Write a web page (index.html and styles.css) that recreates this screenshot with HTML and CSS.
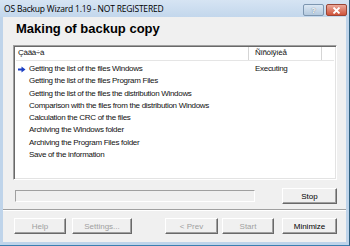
FILE: index.html
```html
<!DOCTYPE html>
<html lang="en">
<head>
    <meta charset="UTF-8">
    <title>OS Backup Wizard 1.19 - NOT REGISTERED</title>
    <link rel="stylesheet" href="styles.css">
</head>
<body>
    <div class="window">
        <div class="titlebar">
            <span class="title">OS Backup Wizard 1.19 - NOT REGISTERED</span>
            <div class="caption-buttons">
                <div class="cap-btn help-cap">?</div>
                <div class="cap-btn close-cap">
                    <svg width="9" height="7" viewBox="0 0 9 7"><path d="M1.5 0.5 L7.5 6.5 M7.5 0.5 L1.5 6.5" stroke="#fff" stroke-width="1.8"/></svg>
                </div>
            </div>
        </div>

        <div class="client">
            <h1>Making of backup copy</h1>

            <div class="listbox">
                <div class="list-header">
                    <div class="col-task">Çàäà÷à</div>
                    <div class="col-state">Ñîñòîÿíèå</div>
                    <div class="col-rest"></div>
                </div>
                <div class="rows">
                    <div class="row">
                        <span class="mark">
                            <svg width="8" height="7" viewBox="0 0 8 7"><path d="M0 2.5 H3.5 V0.5 L7.5 3.5 L3.5 6.5 V4.5 H0 Z" fill="#1c3fc4"/></svg>
                        </span>
                        <span class="task">Getting the list of the files Windows</span>
                        <span class="state">Executing</span>
                    </div>
                    <div class="row"><span class="mark"></span><span class="task">Getting the list of the files Program Files</span></div>
                    <div class="row"><span class="mark"></span><span class="task">Getting the list of the files the distribution Windows</span></div>
                    <div class="row"><span class="mark"></span><span class="task">Comparison with the files from the distribution Windows</span></div>
                    <div class="row"><span class="mark"></span><span class="task">Calculation the CRC of the files</span></div>
                    <div class="row"><span class="mark"></span><span class="task">Archiving the Windows folder</span></div>
                    <div class="row"><span class="mark"></span><span class="task">Archiving the Program Files folder</span></div>
                    <div class="row"><span class="mark"></span><span class="task">Save of the information</span></div>
                </div>
            </div>

            <div class="progress-row">
                <div class="progress"></div>
                <button class="btn btn-stop">Stop</button>
            </div>

            <div class="separator"></div>

            <div class="button-row">
                <button class="btn btn-help" disabled>Help</button>
                <button class="btn btn-settings" disabled>Settings...</button>
                <button class="btn btn-prev" disabled>&lt; Prev</button>
                <button class="btn btn-start" disabled>Start</button>
                <button class="btn btn-min">Minimize</button>
            </div>
        </div>
    </div>
</body>
</html>
```

FILE: styles.css
```css
body { margin: 0; width: 350px; height: 246px; overflow: hidden; font-family: "Liberation Sans", Arial, sans-serif; font-size: 8px; }
.window { width: 350px; height: 246px; background: #bfd4ea; display: flex; flex-direction: column; box-sizing: border-box; border-right: 1px solid #2f5f7e; border-bottom: 1px solid #3a7fb0; }
.titlebar { height: 17px; display: flex; align-items: center; padding-left: 4px; background: linear-gradient(#d6e4f3, #c3d7ec); }
.title { font-family: "Open Sans", sans-serif; font-size: 8.5px; color: #000; flex: 1; letter-spacing: -0.2px; }
.caption-buttons { display: flex; gap: 2px; margin-right: 2px; align-self: flex-start; margin-top: 4px; }
.cap-btn { width: 19px; height: 10px; border: 1px solid #7d96b0; border-radius: 2px; display: flex; align-items: center; justify-content: center; font-size: 8px; font-weight: bold; color: #fff; }
.help-cap { background: linear-gradient(#dbe7f3, #b4c9de); text-shadow: 0 0 1px #456; }
.close-cap { background: linear-gradient(#eba99b, #d0533a); border-color: #9a4535; }
.client { flex: 1; margin: 0 3px 3px 3px; background: #f0f0f0; display: flex; flex-direction: column; }
h1 { margin: 4px 0 0 13px; font-size: 13px; font-weight: bold; line-height: 16px; height: 24px; }
.listbox { margin-left: 10px; width: 324px; height: 135px; box-sizing: border-box; background: #fff; border: 1px solid; border-color: #a0a0a0 #fff #fff #a0a0a0; box-shadow: inset 1px 1px 0 #696969, inset -1px -1px 0 #e3e3e3; padding: 1px 2px 0 2px; font-size: 8px; letter-spacing: -0.3px; color: #111; }
.list-header { display: flex; height: 13px; line-height: 12px; border-bottom: 1px solid #e5e5e5; }
.col-task { box-sizing: border-box; width: 233px; padding-left: 2px; border-right: 1px solid #d5d5d5; }
.col-state { box-sizing: border-box; width: 73px; padding-left: 6px; border-right: 1px solid #d5d5d5; }
.col-rest { flex: 1; }
.rows { padding-top: 2px; }
.row { display: flex; height: 12.3px; line-height: 12px; white-space: nowrap; }
.mark { width: 11px; padding-left: 2px; display: flex; align-items: center; }
.task { width: 226px; }
.progress-row { display: flex; align-items: center; margin-top: 8px; }
.progress { margin-left: 12px; width: 240px; height: 12px; box-sizing: border-box; border: 1px solid; border-color: #a0a0a0 #fff #fff #a0a0a0; }
.btn { font-family: "Liberation Sans", Arial, sans-serif; font-size: 8px; height: 16px; padding: 0; background: #f0f0f0; color: #000; border: 1px solid; border-color: #fff #696969 #696969 #fff; box-shadow: inset -1px -1px 0 #a0a0a0; }
.btn:disabled { color: #a0a0a0; }
.btn-stop { margin-left: 27px; width: 55px; }
.separator { margin-top: 5px; height: 1px; background: #a0a0a0; border-bottom: 1px solid #fff; }
.button-row { display: flex; margin-top: 7px; }
.btn-help { margin-left: 11px; width: 52px; }
.btn-settings { margin-left: 6px; width: 60px; }
.btn-prev { margin-left: 33px; width: 53px; }
.btn-start { margin-left: 4px; width: 52px; }
.btn-min { margin-left: 8px; width: 55px; }
```
